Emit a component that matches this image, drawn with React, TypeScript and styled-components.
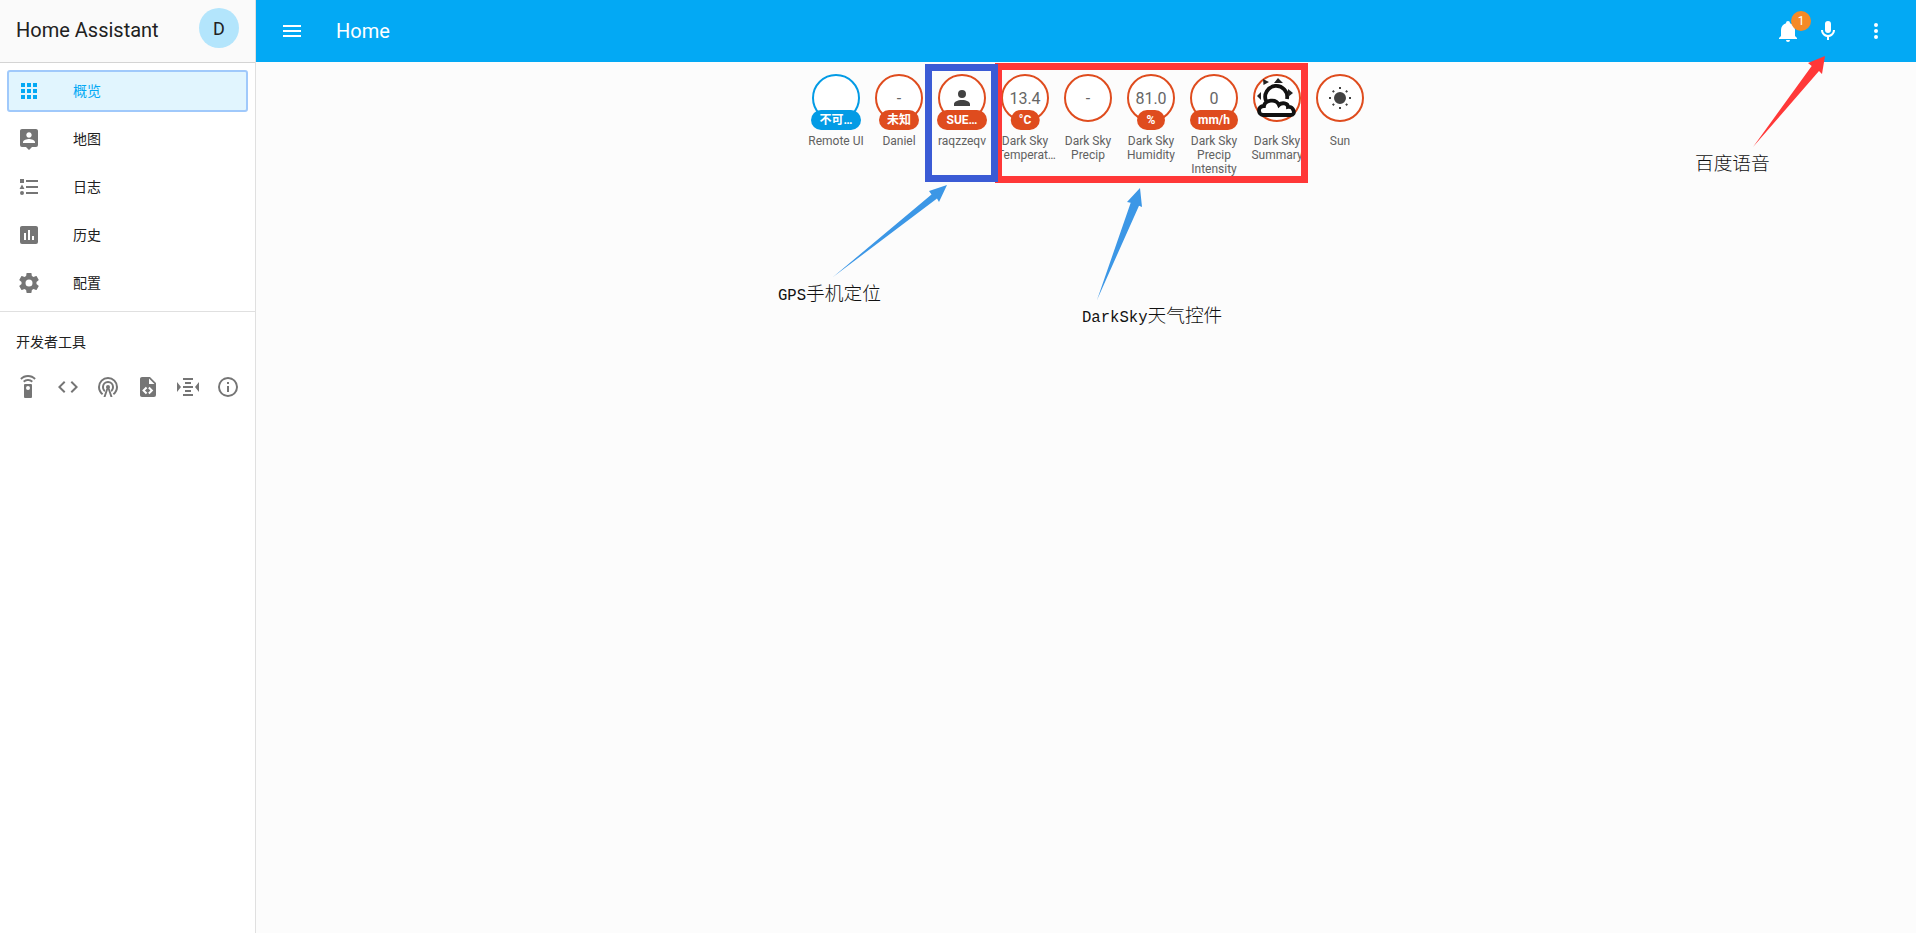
import React from "react";
import styled, { createGlobalStyle } from "styled-components";

const mdi = {
  apps: "M16,20H20V16H16M16,14H20V10H16M10,8H14V4H10M16,8H20V4H16M10,14H14V10H10M4,14H8V10H4M4,20H8V16H4M10,20H14V16H10M4,8H8V4H4V8Z",
  accountLocation:
    "M18,16H6V15.1C6,13.1 10,12 12,12C14,12 18,13.1 18,15.1M12,5.3C13.5,5.3 14.7,6.5 14.7,8C14.7,9.5 13.5,10.7 12,10.7C10.5,10.7 9.3,9.5 9.3,8C9.3,6.5 10.5,5.3 12,5.3M19,2H5C3.89,2 3,2.89 3,4V18A2,2 0 0,0 5,20H9L12,23L15,20H19A2,2 0 0,0 21,18V4C21,2.89 20.1,2 19,2Z",
  list: "M5,9.5L7.5,14H2.5L5,9.5M3,4H7V8H3V4M5,20A2,2 0 0,0 7,18A2,2 0 0,0 5,16A2,2 0 0,0 3,18A2,2 0 0,0 5,20M9,5V7H21V5H9M9,19H21V17H9V19M9,13H21V11H9V13Z",
  poll: "M17,17H15V13H17M13,17H11V7H13M9,17H7V10H9M19,3H5C3.89,3 3,3.89 3,5V19A2,2 0 0,0 5,21H19A2,2 0 0,0 21,19V5C21,3.89 20.1,3 19,3Z",
  settings:
    "M12,15.5A3.5,3.5 0 0,1 8.5,12A3.5,3.5 0 0,1 12,8.5A3.5,3.5 0 0,1 15.5,12A3.5,3.5 0 0,1 12,15.5M19.43,12.97C19.47,12.65 19.5,12.33 19.5,12C19.5,11.67 19.47,11.34 19.43,11L21.54,9.37C21.73,9.22 21.78,8.95 21.66,8.73L19.66,5.27C19.54,5.05 19.27,4.96 19.05,5.05L16.56,6.05C16.04,5.66 15.5,5.32 14.87,5.07L14.5,2.42C14.46,2.18 14.25,2 14,2H10C9.75,2 9.54,2.18 9.5,2.42L9.13,5.07C8.5,5.32 7.96,5.66 7.44,6.05L4.95,5.05C4.73,4.96 4.46,5.05 4.34,5.27L2.34,8.73C2.21,8.95 2.27,9.22 2.46,9.37L4.57,11C4.53,11.34 4.5,11.67 4.5,12C4.5,12.33 4.53,12.65 4.57,12.97L2.46,14.63C2.27,14.78 2.21,15.05 2.34,15.27L4.34,18.73C4.46,18.95 4.73,19.03 4.95,18.95L7.44,17.94C7.96,18.34 8.5,18.68 9.13,18.93L9.5,21.58C9.54,21.82 9.75,22 10,22H14C14.25,22 14.46,21.82 14.5,21.58L14.87,18.93C15.5,18.67 16.04,18.34 16.56,17.94L19.05,18.95C19.27,19.03 19.54,18.95 19.66,18.73L21.66,15.27C21.78,15.05 21.73,14.78 21.54,14.63L19.43,12.97Z",
  remote:
    "M12,0C8.96,0 6.21,1.23 4.22,3.22L5.63,4.63C7.26,3 9.5,2 12,2C14.5,2 16.74,3 18.36,4.64L19.77,3.23C17.79,1.23 15.04,0 12,0M7.05,6.05L8.46,7.46C9.37,6.56 10.62,6 12,6C13.38,6 14.63,6.56 15.54,7.46L16.95,6.05C15.68,4.78 13.93,4 12,4C10.07,4 8.32,4.78 7.05,6.05M12,15A2,2 0 0,1 10,13A2,2 0 0,1 12,11A2,2 0 0,1 14,13A2,2 0 0,1 12,15M15,9H9A1,1 0 0,0 8,10V22A1,1 0 0,0 9,23H15A1,1 0 0,0 16,22V10A1,1 0 0,0 15,9Z",
  code: "M14.6,16.6L19.2,12L14.6,7.4L16,6L22,12L16,18L14.6,16.6M9.4,16.6L4.8,12L9.4,7.4L8,6L2,12L8,18L9.4,16.6Z",
  tower:
    "M12,2A10,10 0 0,0 2,12C2,15.3 3.6,18.2 6,20L7.2,18.4C5.3,16.9 4,14.6 4,12A8,8 0 0,1 12,4A8,8 0 0,1 20,12C20,14.6 18.7,16.9 16.8,18.4L18,20C20.4,18.2 22,15.3 22,12A10,10 0 0,0 12,2M12,6A6,6 0 0,0 6,12C6,14 7,15.8 8.5,16.9L9.2,15C8.4,14.3 8,13.2 8,12A4,4 0 0,1 12,8A4,4 0 0,1 16,12C16,13.2 15.6,14.3 14.8,15L15.5,16.9C17,15.8 18,14 18,12A6,6 0 0,0 12,6M12,10A2,2 0 0,0 10,12C10,12.5 10.2,12.9 10.5,13.3L7.5,22H9.5L12,14.5L14.5,22H16.5L13.5,13.3C13.8,12.9 14,12.5 14,12A2,2 0 0,0 12,10Z",
  fileXml:
    "M13,9H18.5L13,3.5V9M6,2H14L20,8V20A2,2 0 0,1 18,22H6C4.89,22 4,21.1 4,20V4C4,2.89 4.89,2 6,2M6.12,15.5L9.86,19.24L11.28,17.83L8.95,15.5L11.28,13.17L9.86,11.76L6.12,15.5M17.28,15.5L13.54,11.76L12.12,13.17L14.45,15.5L12.12,17.83L13.54,19.24L17.28,15.5Z",
  spacing:
    "M7,3H17V5H7V3M9,7H15V9H9V7M7,11H17V13H7V11M9,15H15V17H9V15M7,19H17V21H7V19M5,12L1,7V17L5,12M19,12L23,7V17L19,12Z",
  info: "M11,9H13V7H11M12,20C7.59,20 4,16.41 4,12C4,7.59 7.59,4 12,4C16.41,4 20,7.59 20,12C20,16.41 16.41,20 12,20M12,2A10,10 0 0,0 2,12A10,10 0 0,0 12,22A10,10 0 0,0 22,12A10,10 0 0,0 12,2M11,17H13V11H11V17Z",
  menu: "M3,6H21V8H3V6M3,11H21V13H3V11M3,16H21V18H3V16Z",
  bell: "M21,19V20H3V19L5,17V11C5,7.9 7.03,5.17 10,4.29C10,4.19 10,4.1 10,4A2,2 0 0,1 12,2A2,2 0 0,1 14,4C14,4.1 14,4.19 14,4.29C16.97,5.17 19,7.9 19,11V17L21,19M14,21A2,2 0 0,1 12,23A2,2 0 0,1 10,21",
  mic: "M12,2A3,3 0 0,1 15,5V11A3,3 0 0,1 12,14A3,3 0 0,1 9,11V5A3,3 0 0,1 12,2M19,11C19,14.53 16.39,17.44 13,17.93V21H11V17.93C7.61,17.44 5,14.53 5,11H7A5,5 0 0,0 12,16A5,5 0 0,0 17,11H19Z",
  dots: "M12,16A2,2 0 0,1 14,18A2,2 0 0,1 12,20A2,2 0 0,1 10,18A2,2 0 0,1 12,16M12,10A2,2 0 0,1 14,12A2,2 0 0,1 12,14A2,2 0 0,1 10,12A2,2 0 0,1 12,10M12,4A2,2 0 0,1 14,6A2,2 0 0,1 12,8A2,2 0 0,1 10,6A2,2 0 0,1 12,4Z",
  account:
    "M12,4A4,4 0 0,1 16,8A4,4 0 0,1 12,12A4,4 0 0,1 8,8A4,4 0 0,1 12,4M12,14C16.42,14 20,15.79 20,18V20H4V18C4,15.79 7.58,14 12,14Z",
  sun: "M12,6A6,6 0 0,1 18,12A6,6 0 0,1 12,18A6,6 0 0,1 6,12A6,6 0 0,1 12,6M11,1H13V3H11M11,21H13V23H11M1,11H3V13H1M21,11H23V13H21M4,5.4L5.4,4L6.8,5.4L5.4,6.8M17.2,18.6L18.6,17.2L20,18.6L18.6,20M4,18.6L5.4,17.2L6.8,18.6L5.4,20M17.2,5.4L18.6,4L20,5.4L18.6,6.8Z",
};

const GlobalStyle = createGlobalStyle`
  html, body {
    margin: 0;
    height: 100%;
    background: #fcfcfc;
  }

  body {
    font-family: Roboto, "Noto Sans CJK SC", sans-serif;
    color: #212121;
  }
`;

const Page = styled.div`
  position: relative;
  display: flex;
  width: 1916px;
  height: 933px;
  overflow: hidden;
`;

const Sidebar = styled.aside`
  flex: 0 0 256px;
  box-sizing: border-box;
  border-right: 1px solid #e0e0e0;
  background: #fff;
`;

const SidebarHeader = styled.div`
  display: flex;
  justify-content: space-between;
  box-sizing: border-box;
  height: 63px;
  padding: 8px 16px 0;
  border-bottom: 1px solid #d4d4d4;
  background: #fafafa;
`;

const AppName = styled.div`
  font-size: 20px;
  line-height: 44px;
`;

const Avatar = styled.div`
  display: flex;
  align-items: center;
  justify-content: center;
  box-sizing: border-box;
  width: 40px;
  height: 40px;
  padding-top: 1px;
  border-radius: 50%;
  background: #b3e5fc;
  font-size: 18px;
`;

const NavList = styled.nav`
  padding: 4px 0 1px;
  border-bottom: 1px solid #e0e0e0;
`;

const NavRow = styled.a<{ $active?: boolean }>`
  display: flex;
  align-items: center;
  box-sizing: border-box;
  height: 42px;
  margin: 3px 7px 6px;
  padding-left: 8px;
  gap: 32px;
  border: 2px solid ${(p) => (p.$active ? "#a0c9fb" : "transparent")};
  border-radius: 3px;
  background: ${(p) => (p.$active ? "#e1f5fe" : "transparent")};
  color: ${(p) => (p.$active ? "#03a9f4" : "#212121")};
  font-size: 14px;

  svg {
    color: ${(p) => (p.$active ? "#03a9f4" : "#757575")};
  }
`;

const NavLabel = styled.span`
  margin-bottom: 3px;
`;

const Icon = styled.svg.attrs({ viewBox: "0 0 24 24" })`
  display: block;
  flex: none;
  width: 24px;
  height: 24px;
  fill: currentColor;
`;

const DevTitle = styled.div`
  padding: 20px 16px 0;
  font-size: 14px;
  line-height: 20px;
`;

const DevTools = styled.div`
  display: flex;
  padding: 15px 0 0 8px;
  color: #757575;
`;

const DevTool = styled.div`
  padding: 8px;
`;

const Main = styled.main`
  flex: 1;
  min-width: 0;
`;

const TopBar = styled.header`
  display: flex;
  align-items: center;
  box-sizing: border-box;
  height: 62px;
  padding: 0 20px 0 24px;
  background: #03a9f4;
  color: #fff;
`;

const Title = styled.div`
  flex: 1;
  margin-left: 32px;
  font-size: 20px;
`;

const BarButton = styled.div<{ $gap?: number }>`
  position: relative;
  padding: 8px;
  margin-left: ${(p) => p.$gap ?? 0}px;
`;

const NotifyCount = styled.span`
  position: absolute;
  top: 0;
  right: -3px;
  width: 20px;
  height: 20px;
  border-radius: 50%;
  background: #f58a26;
  font-size: 12px;
  line-height: 20px;
  text-align: center;
`;

const BadgeRow = styled.section`
  display: flex;
  justify-content: center;
  padding: 12px 0 0 4px;
`;

const Badge = styled.div`
  display: flex;
  flex-direction: column;
  align-items: center;
  width: 63px;
`;

const Ring = styled.div<{ $color?: string }>`
  position: relative;
  display: flex;
  align-items: center;
  justify-content: center;
  box-sizing: border-box;
  width: 48px;
  height: 48px;
  border: 2px solid ${(p) => p.$color ?? "#df4c1e"};
  border-radius: 50%;
  background: #fff;
  color: #666;
  font-size: 16px;

  svg {
    color: #424242;
  }
`;

const Pill = styled.span<{ $color?: string; $clipped?: boolean }>`
  position: absolute;
  bottom: -10px;
  left: 50%;
  transform: translateX(-50%);
  box-sizing: border-box;
  min-width: ${(p) => (p.$clipped ? 50 : 28)}px;
  height: 20px;
  padding: 0 8px;
  border-radius: 10px;
  background: ${(p) => p.$color ?? "#df4c1e"};
  color: #fff;
  font-size: 12px;
  font-weight: 700;
  line-height: 20px;
  text-align: center;
  white-space: nowrap;
`;

const BadgeName = styled.div`
  width: 56px;
  margin-top: 12px;
  color: #616161;
  font-size: 12px;
  line-height: 14px;
  text-align: center;
`;

const Frame = styled.div<{ $color: string; $x: number; $y: number; $w: number; $h: number }>`
  position: absolute;
  left: ${(p) => p.$x}px;
  top: ${(p) => p.$y}px;
  box-sizing: border-box;
  width: ${(p) => p.$w}px;
  height: ${(p) => p.$h}px;
  border: 7px solid ${(p) => p.$color};
`;

const Arrows = styled.svg`
  position: absolute;
  inset: 0;
  width: 1916px;
  height: 933px;
  pointer-events: none;
`;

const Note = styled.div<{ $x: number; $y: number }>`
  position: absolute;
  left: ${(p) => p.$x}px;
  top: ${(p) => p.$y}px;
  color: #111;
  font-family: "Noto Sans CJK SC", sans-serif;
  font-size: 18.7px;
  font-weight: 300;
  line-height: 24px;
  white-space: nowrap;
`;

const NoteLatin = styled.span`
  font-family: "Liberation Mono", monospace;
  font-size: 15.6px;
  font-weight: 400;
`;

const CloudSun = () => (
  <svg width="44" height="44" viewBox="0 0 44 44" fill="none" stroke="#111" strokeWidth="3.8">
    <path d="M11 25A11 11 0 1 1 32 23" />
    <path d="M8 39C3 39 2 30 9 30C10 24 21 22 24 29C27 26 33 27 33 31C39 30 41 39 36 39Z" />
    <path d="M8 3L14 6L8.5 9Z M23 2L28 7L19 7Z M33 13L38 17L33 21Z M6 16L2 20L6 24Z" fill="#222" stroke="none" />
  </svg>
);

const navItems = [
  { label: "概览", path: mdi.apps, active: true },
  { label: "地图", path: mdi.accountLocation },
  { label: "日志", path: mdi.list },
  { label: "历史", path: mdi.poll },
  { label: "配置", path: mdi.settings },
];

const devTools = [mdi.remote, mdi.code, mdi.tower, mdi.fileXml, mdi.spacing, mdi.info];

export default function App() {
  return (
    <>
      <GlobalStyle />
      <Page>
        <Sidebar>
          <SidebarHeader>
            <AppName>Home Assistant</AppName>
            <Avatar>D</Avatar>
          </SidebarHeader>
          <NavList>
            {navItems.map((item) => (
              <NavRow key={item.label} $active={item.active}>
                <Icon>
                  <path d={item.path} />
                </Icon>
                <NavLabel>{item.label}</NavLabel>
              </NavRow>
            ))}
          </NavList>
          <DevTitle>开发者工具</DevTitle>
          <DevTools>
            {devTools.map((d) => (
              <DevTool key={d}>
                <Icon>
                  <path d={d} />
                </Icon>
              </DevTool>
            ))}
          </DevTools>
        </Sidebar>

        <Main>
          <TopBar>
            <Icon>
              <path d={mdi.menu} />
            </Icon>
            <Title>Home</Title>
            <BarButton>
              <Icon>
                <path d={mdi.bell} />
              </Icon>
              <NotifyCount>1</NotifyCount>
            </BarButton>
            <BarButton>
              <Icon>
                <path d={mdi.mic} />
              </Icon>
            </BarButton>
            <BarButton $gap={8}>
              <Icon>
                <path d={mdi.dots} />
              </Icon>
            </BarButton>
          </TopBar>

          <BadgeRow>
            <Badge>
              <Ring $color="#039be5">
                <Pill $color="#039be5" $clipped>
                  不可…
                </Pill>
              </Ring>
              <BadgeName>Remote UI</BadgeName>
            </Badge>
            <Badge>
              <Ring>
                -<Pill>未知</Pill>
              </Ring>
              <BadgeName>Daniel</BadgeName>
            </Badge>
            <Badge>
              <Ring>
                <Icon>
                  <path d={mdi.account} />
                </Icon>
                <Pill $clipped>SUE…</Pill>
              </Ring>
              <BadgeName>raqzzeqv</BadgeName>
            </Badge>
            <Badge>
              <Ring>
                13.4<Pill>°C</Pill>
              </Ring>
              <BadgeName>Dark Sky Temperat…</BadgeName>
            </Badge>
            <Badge>
              <Ring>-</Ring>
              <BadgeName>Dark Sky Precip</BadgeName>
            </Badge>
            <Badge>
              <Ring>
                81.0<Pill>%</Pill>
              </Ring>
              <BadgeName>Dark Sky Humidity</BadgeName>
            </Badge>
            <Badge>
              <Ring>
                0<Pill>mm/h</Pill>
              </Ring>
              <BadgeName>Dark Sky Precip Intensity</BadgeName>
            </Badge>
            <Badge>
              <Ring>
                <CloudSun />
              </Ring>
              <BadgeName>Dark Sky Summary</BadgeName>
            </Badge>
            <Badge>
              <Ring>
                <Icon>
                  <path d={mdi.sun} />
                </Icon>
              </Ring>
              <BadgeName>Sun</BadgeName>
            </Badge>
          </BadgeRow>
        </Main>

        <Frame $color="#ff3838" $x={995} $y={63} $w={313} $h={120} />
        <Frame $color="#3b5bd5" $x={925} $y={64} $w={73} $h={118} />

        <Arrows>
          <polygon points="833,277 931.5,194.5 929,191 947,185 939,202 937,198.5" fill="#3c97e6" />
          <polygon points="1097,300 1130.7,202.7 1127,202 1140,188 1142,207 1139,205.7" fill="#3c97e6" />
          <polygon points="1753,147 1811.7,66 1808,63 1825,56 1822,74 1819,71" fill="#ff3838" />
        </Arrows>

        <Note $x={778} $y={280}>
          <NoteLatin>GPS</NoteLatin>手机定位
        </Note>
        <Note $x={1082} $y={302}>
          <NoteLatin>DarkSky</NoteLatin>天气控件
        </Note>
        <Note $x={1695} $y={150}>
          百度语音
        </Note>
      </Page>
    </>
  );
}
